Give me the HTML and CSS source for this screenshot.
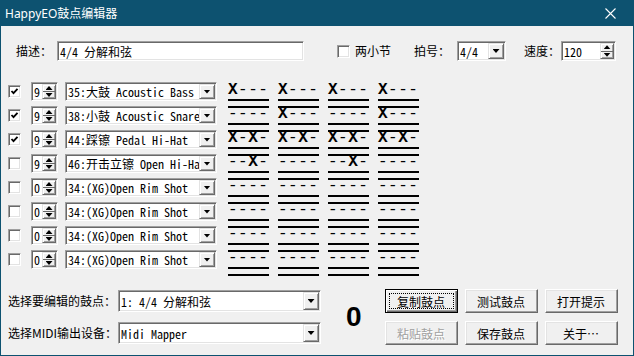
FILE: index.html
```html
<!DOCTYPE html>
<html lang="zh-CN">
<head>
  <meta charset="UTF-8">
  <meta name="viewport" content="width=device-width, initial-scale=1.0">
  <title>HappyEO鼓点编辑器</title>
  <link rel="stylesheet" href="styles.css">
</head>
<body>
  <div class="window">
    <div class="titlebar">
      <span class="title">HappyEO鼓点编辑器</span>
      <svg class="close" width="11" height="11" viewBox="0 0 11 11">
        <path d="M0.5 0.5L10.5 10.5M10.5 0.5L0.5 10.5" stroke="#fff" stroke-width="1.1" fill="none"/>
      </svg>
    </div>

    <div class="content">
      <div class="toprow">
        <span class="lbl desc-lbl">描述：</span>
        <div class="field desc-field"><span class="val">4/4 分解和弦</span></div>
        <span class="check two-bar"></span>
        <span class="lbl bars-lbl">两小节</span>
        <span class="lbl meter-lbl">拍号：</span>
        <div class="field combo meter"><span class="val">4/4</span><span class="drop"></span></div>
        <span class="lbl tempo-lbl">速度：</span>
        <div class="field spin tempo"><span class="val">120</span><span class="spin-btn"><i></i><i></i></span></div>
      </div>

      <div class="tracks">
        <div class="track">
          <span class="check"><svg viewBox="0 0 9 9"><path d="M1.5 4l2 2.2 4-4.4" /></svg></span>
          <div class="field spin"><span class="val">9</span><span class="spin-btn"><i></i><i></i></span></div>
          <div class="field combo drum"><span class="val">35:大鼓 Acoustic Bass</span><span class="drop"></span></div>
          <div class="beats">
            <div class="beat"><b>X</b>---</div>
            <div class="beat"><b>X</b>---</div>
            <div class="beat"><b>X</b>---</div>
            <div class="beat"><b>X</b>---</div>
          </div>
        </div>
        <div class="track">
          <span class="check"><svg viewBox="0 0 9 9"><path d="M1.5 4l2 2.2 4-4.4" /></svg></span>
          <div class="field spin"><span class="val">9</span><span class="spin-btn"><i></i><i></i></span></div>
          <div class="field combo drum"><span class="val">38:小鼓 Acoustic Snare</span><span class="drop"></span></div>
          <div class="beats">
            <div class="beat">----</div>
            <div class="beat"><b>X</b>---</div>
            <div class="beat">----</div>
            <div class="beat"><b>X</b>---</div>
          </div>
        </div>
        <div class="track">
          <span class="check"><svg viewBox="0 0 9 9"><path d="M1.5 4l2 2.2 4-4.4" /></svg></span>
          <div class="field spin"><span class="val">9</span><span class="spin-btn"><i></i><i></i></span></div>
          <div class="field combo drum"><span class="val">44:踩镲 Pedal Hi-Hat</span><span class="drop"></span></div>
          <div class="beats">
            <div class="beat"><b>X</b>-<b>X</b>-</div>
            <div class="beat"><b>X</b>-<b>X</b>-</div>
            <div class="beat"><b>X</b>-<b>X</b>-</div>
            <div class="beat"><b>X</b>-<b>X</b>-</div>
          </div>
        </div>
        <div class="track">
          <span class="check"></span>
          <div class="field spin"><span class="val">9</span><span class="spin-btn"><i></i><i></i></span></div>
          <div class="field combo drum"><span class="val">46:开击立镲 Open Hi-Hat</span><span class="drop"></span></div>
          <div class="beats">
            <div class="beat">--<b>X</b>-</div>
            <div class="beat">----</div>
            <div class="beat">--<b>X</b>-</div>
            <div class="beat">----</div>
          </div>
        </div>
        <div class="track">
          <span class="check"></span>
          <div class="field spin"><span class="val">0</span><span class="spin-btn"><i></i><i></i></span></div>
          <div class="field combo drum"><span class="val">34:(XG)Open Rim Shot</span><span class="drop"></span></div>
          <div class="beats">
            <div class="beat">----</div>
            <div class="beat">----</div>
            <div class="beat">----</div>
            <div class="beat">----</div>
          </div>
        </div>
        <div class="track">
          <span class="check"></span>
          <div class="field spin"><span class="val">0</span><span class="spin-btn"><i></i><i></i></span></div>
          <div class="field combo drum"><span class="val">34:(XG)Open Rim Shot</span><span class="drop"></span></div>
          <div class="beats">
            <div class="beat">----</div>
            <div class="beat">----</div>
            <div class="beat">----</div>
            <div class="beat">----</div>
          </div>
        </div>
        <div class="track">
          <span class="check"></span>
          <div class="field spin"><span class="val">0</span><span class="spin-btn"><i></i><i></i></span></div>
          <div class="field combo drum"><span class="val">34:(XG)Open Rim Shot</span><span class="drop"></span></div>
          <div class="beats">
            <div class="beat">----</div>
            <div class="beat">----</div>
            <div class="beat">----</div>
            <div class="beat">----</div>
          </div>
        </div>
        <div class="track">
          <span class="check"></span>
          <div class="field spin"><span class="val">0</span><span class="spin-btn"><i></i><i></i></span></div>
          <div class="field combo drum"><span class="val">34:(XG)Open Rim Shot</span><span class="drop"></span></div>
          <div class="beats">
            <div class="beat">----</div>
            <div class="beat">----</div>
            <div class="beat">----</div>
            <div class="beat">----</div>
          </div>
        </div>
      </div>

      <div class="bottom">
        <div class="pickers">
          <div class="picker">
            <span class="lbl">选择要编辑的鼓点：</span>
            <div class="field combo pick"><span class="val">1: 4/4 分解和弦</span><span class="drop"></span></div>
          </div>
          <div class="picker">
            <span class="lbl">选择MIDI输出设备：</span>
            <div class="field combo pick"><span class="val">Midi Mapper</span><span class="drop"></span></div>
          </div>
        </div>
        <div class="count">0</div>
        <div class="actions">
          <button class="btn focus">复制鼓点</button>
          <button class="btn">测试鼓点</button>
          <button class="btn">打开提示</button>
          <button class="btn" disabled>粘贴鼓点</button>
          <button class="btn">保存鼓点</button>
          <button class="btn">关于…</button>
        </div>
      </div>
    </div>
  </div>
</body>
</html>
```

FILE: styles.css
```css
* {
  box-sizing: border-box;
}
body {
  margin: 0;
  font-family: "Noto Sans CJK SC", sans-serif;
  font-size: 12px;
  color: #000;
}
.window {
  width: 634px;
  height: 356px;
  background: #f0f0f0;
  border: 1px solid #0d5270;
  border-top: 0;
}
.titlebar {
  height: 26px;
  background: #0d5270;
  color: #fff;
  display: flex;
  align-items: center;
  justify-content: space-between;
  padding: 0 17px 0 4px;
  font-family: "Noto Sans", "Noto Sans CJK SC", sans-serif;
  font-size: 12px;
}
.content {
  padding-top: 15px;
}

/* sunken edit / combo / spin boxes */
.field {
  display: flex;
  align-items: stretch;
  background: #fff;
  border: 1px solid;
  border-color: #a0a0a0 #fff #fff #a0a0a0;
  box-shadow: inset 1px 1px #696969, inset -1px -1px #e3e3e3;
  padding: 1px;
}
.field .val {
  flex: 1;
  overflow: hidden;
  white-space: nowrap;
  padding-left: 1px;
  font-family: "Noto Sans Mono CJK SC", "Liberation Mono", "Noto Sans CJK SC", monospace;
  font-size: 12px;
  display: flex;
  align-items: center;
}
.drop,
.spin-btn {
  background: #f0f0f0;
  border: 1px solid;
  border-color: #e3e3e3 #696969 #696969 #e3e3e3;
  box-shadow: inset 1px 1px #fff, inset -1px -1px #a0a0a0;
}
.drop {
  width: 16px;
  display: flex;
  align-items: center;
  justify-content: center;
}
.drop::after {
  content: "";
  width: 7px;
  height: 4px;
  background: #000;
  clip-path: polygon(0 0, 100% 0, 50% 100%);
}
.spin-btn {
  width: 14px;
  display: flex;
  flex-direction: column;
}
.spin-btn i {
  flex: 1;
  display: flex;
  align-items: center;
  justify-content: center;
}
.spin-btn i:first-child {
  border-bottom: 1px solid #696969;
}
.spin-btn i::after {
  content: "";
  width: 7px;
  height: 4px;
  background: #000;
  clip-path: polygon(50% 0, 100% 100%, 0 100%);
}
.spin-btn i:last-child::after {
  clip-path: polygon(0 0, 100% 0, 50% 100%);
}

.check {
  width: 13px;
  height: 13px;
  flex: none;
  background: #fff;
  border: 1px solid;
  border-color: #a0a0a0 #fff #fff #a0a0a0;
  box-shadow: inset 1px 1px #696969, inset -1px -1px #e3e3e3;
  padding: 1px;
}
.check svg {
  display: block;
  width: 9px;
  height: 9px;
  fill: none;
  stroke: #000;
  stroke-width: 1.8;
}
.lbl {
  white-space: nowrap;
  line-height: 20px;
}

/* top row */
.toprow {
  display: flex;
  align-items: center;
  height: 20px;
}
.desc-lbl {
  margin-left: 15px;
  width: 41px;
}
.desc-field {
  width: 247px;
  height: 20px;
}
.two-bar {
  margin-left: 33px;
}
.bars-lbl {
  margin-left: 5px;
  width: 36px;
}
.meter-lbl {
  margin-left: 23px;
  width: 43px;
}
.meter {
  width: 49px;
  height: 20px;
}
.tempo-lbl {
  margin-left: 18px;
  width: 37px;
}
.tempo {
  width: 55px;
  height: 20px;
}

/* drum tracks */
.tracks {
  margin-top: 21px;
}
.track {
  display: flex;
  align-items: flex-start;
  height: 24px;
}
.track .check {
  margin: 3px 0 0 7px;
}
.track .spin {
  margin-left: 10px;
  width: 27px;
  height: 19px;
}
.drum {
  margin-left: 7px;
  width: 152px;
  height: 19px;
}
.beats {
  display: flex;
  gap: 9px;
  margin-left: 11px;
}
.beat {
  width: 41px;
  height: 22px;
  font-family: "Liberation Mono", monospace;
  font-size: 16px;
  line-height: 17px;
  letter-spacing: 0.5px;
  white-space: nowrap;
}
.beat::after {
  content: "";
  display: block;
  height: 5px;
  border-top: 2px solid #000;
  border-bottom: 2px solid #000;
}

/* bottom panel */
.bottom {
  display: flex;
  align-items: center;
  margin-top: 15px;
}
.pickers {
  display: flex;
  flex-direction: column;
  gap: 10px;
}
.picker {
  display: flex;
  align-items: center;
}
.picker .lbl {
  margin-left: 7px;
  width: 110px;
}
.pick {
  width: 203px;
  height: 22px;
}
.count {
  margin-left: 25px;
  font-family: "Liberation Sans", sans-serif;
  font-weight: bold;
  font-size: 28px;
}
.actions {
  display: grid;
  grid-template-columns: repeat(3, 73px);
  grid-auto-rows: 24px;
  gap: 8px 7px;
  margin-left: 23px;
}
.btn {
  font-family: "Noto Sans CJK SC", sans-serif;
  font-size: 12px;
  color: #000;
  background: #f0f0f0;
  padding: 0;
  border: 1px solid;
  border-color: #fff #696969 #696969 #fff;
  box-shadow: inset -1px -1px #a0a0a0, inset 1px 1px #e3e3e3;
}
.btn.focus {
  border-color: #000;
  box-shadow: inset 1px 1px #fff, inset -1px -1px #696969, inset -2px -2px #a0a0a0;
  outline: 1px dotted #000;
  outline-offset: -5px;
}
.btn:disabled {
  color: #a0a0a0;
  text-shadow: 1px 1px #fff;
}
```
